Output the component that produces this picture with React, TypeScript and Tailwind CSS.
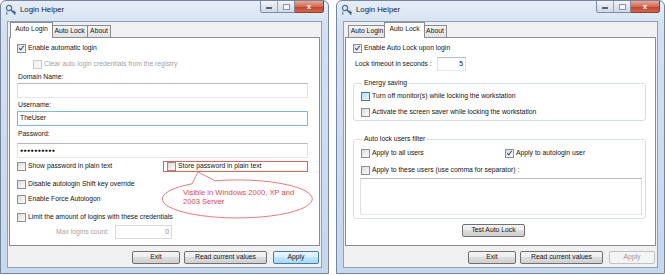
import type { ReactNode } from "react"
import { clsx } from "clsx"

function Box({ checked = false, disabled = false, hover = false }: { checked?: boolean; disabled?: boolean; hover?: boolean }) {
  return (
    <span
      className={clsx(
        "flex h-[9px] w-[9px] shrink-0 items-center justify-center border",
        disabled
          ? "border-[#c9c9c9] bg-[#f4f4f4]"
          : hover
            ? "border-[#3c7fb1] bg-[linear-gradient(135deg,#b9def6,#eef8fe)]"
            : "border-[#8f8f8f] bg-[linear-gradient(135deg,#d9d9d9,#ffffff)]"
      )}
    >
      {checked && (
        <svg viewBox="0 0 9 9" className="h-[8px] w-[8px]">
          <path d="M1.6 4.6 L3.6 7 L7.4 1.6" fill="none" stroke="#2c4a80" strokeWidth="1.3" />
        </svg>
      )}
    </span>
  )
}

function CheckRow({ label, checked, disabled, hover, className }: { label: string; checked?: boolean; disabled?: boolean; hover?: boolean; className?: string }) {
  return (
    <div className={clsx("flex h-[10px] items-center gap-[2px]", className)}>
      <Box checked={checked} disabled={disabled} hover={hover} />
      <span className={clsx("whitespace-nowrap", disabled && "text-[#a3a3a3]")}>{label}</span>
    </div>
  )
}

function TextBox({ children, focused, disabled, className }: { children?: ReactNode; focused?: boolean; disabled?: boolean; className?: string }) {
  return (
    <div
      className={clsx(
        "flex items-center border bg-white px-[2px]",
        focused ? "border-[#7eb4ea]" : disabled ? "border-[#d5d8dc]" : "border-[#b5b8be] border-b-[#e3e9ef] border-x-[#dbdfe6]",
        className
      )}
    >
      {children}
    </div>
  )
}

function Btn({ children, variant = "normal", className }: { children: ReactNode; variant?: "normal" | "default" | "disabled"; className?: string }) {
  return (
    <button
      className={clsx(
        "flex h-[13px] items-center justify-center rounded-[2px] border",
        variant === "default"
          ? "border-[#3c7fb1] bg-[linear-gradient(#eaf6fd,#d9f0fc_50%,#bee6fd_50%,#a7d9f5)]"
          : variant === "disabled"
            ? "border-[#bfc3c6] bg-[#f4f4f4] text-[#9a9a9a]"
            : "border-[#707070] bg-[linear-gradient(#f4f4f4,#ebebeb_50%,#dddddd_50%,#cfcfcf)]",
        className
      )}
    >
      {children}
    </button>
  )
}

function TitleBar() {
  return (
    <div className="-mx-[6px] flex h-[20px] items-start px-[4px]">
      <div className="mt-[3px] flex h-[12px] items-center gap-[3px]">
        <svg viewBox="0 0 12 12" className="h-[12px] w-[12px]">
          <circle cx="4" cy="4" r="2.6" fill="none" stroke="#4f6f93" strokeWidth="1.2" />
          <path d="M5.8 5.8 L10.5 10.5 M8 8 L9.4 6.6 M9.3 9.3 L10.6 8" stroke="#2f5f8f" strokeWidth="1.3" fill="none" />
          <path d="M2 7 L1.2 10.8 M1.5 9.5 L3 9.8" stroke="#7b93ad" strokeWidth="1" fill="none" />
        </svg>
        <span className="text-[7.8px] text-[#1b1b1b]">Login Helper</span>
      </div>
      <div className="ml-auto flex h-[12px]">
        <div className="flex h-full w-[35px] overflow-hidden rounded-bl-[3px] border border-t-0 border-[#7d8ca2] bg-[linear-gradient(#f3f6fa,#dbe3ee_55%,#cfd9e7)]">
          <div className="flex w-[17px] items-center justify-center border-r border-[#9aa7b8]">
            <span className="mt-[3px] h-[2px] w-[6px] border border-[#5b6676] bg-white" />
          </div>
          <div className="flex flex-1 items-center justify-center">
            <span className="h-[6px] w-[7px] border border-[#8e99a8] bg-[#f4f6f9]" />
          </div>
        </div>
        <div className="flex h-full w-[29px] items-center justify-center rounded-br-[3px] border border-t-0 border-l-0 border-[#8b3b30] bg-[linear-gradient(#e9a594,#d46b55_50%,#c2412b_52%,#d0664c)]">
          <span className="text-[8px] font-bold leading-none text-white">x</span>
        </div>
      </div>
    </div>
  )
}

function Tabs({ active }: { active: number }) {
  const tabs = [
    { label: "Auto Login", w: "w-[38px]", wa: "w-[43px]" },
    { label: "Auto Lock", w: "w-[37px]", wa: "w-[41px]" },
    { label: "About", w: "w-[24px]", wa: "w-[28px]" },
  ]
  return (
    <div className="flex h-[15px] items-end pl-[3px]">
      {tabs.map((t, i) =>
        i === active ? (
          <div key={t.label} className={clsx("relative z-10 -mx-[2px] -mb-[1px] flex h-[16px] items-start justify-center border border-b-0 border-[#898c95] bg-white pt-[3px]", t.wa)}>
            {t.label}
          </div>
        ) : (
          <div key={t.label} className={clsx("flex h-[12px] items-center justify-center border border-b-0 border-[#898c95] bg-[linear-gradient(#f3f3f3,#e3e3e3)]", t.w, i > 0 && i !== active + 1 && "-ml-[1px]")}>
            {t.label}
          </div>
        )
      )}
    </div>
  )
}

function Window({ active, children, applyVariant }: { active: number; children: ReactNode; applyVariant: "default" | "disabled" }) {
  return (
    <div className="flex h-[274px] w-[329px] shrink-0 flex-col rounded-t-[6px] border border-[#75869c] bg-[linear-gradient(#e6edf6,#d2e0f1_30px,#c6d8ee)] px-[6px] pb-[5px]">
      <TitleBar />
      <div className="flex flex-1 flex-col border border-[#8fa1b8] bg-[#f0f0f0] px-[1px]">
        <Tabs active={active} />
        <div className="relative h-[209px] border border-[#898c95] bg-white">{children}</div>
        <div className="mt-[5px] flex pr-[1px]">
          <Btn className="ml-auto w-[48px]">Exit</Btn>
          <Btn className="ml-[4px] w-[83px]">Read current values</Btn>
          <Btn variant={applyVariant} className="ml-[6px] w-[46px]">Apply</Btn>
        </div>
      </div>
    </div>
  )
}

function AutoLoginPanel() {
  return (
    <div className="flex flex-col pl-[7px]">
      <CheckRow className="mt-[5px]" checked label="Enable automatic login" />
      <CheckRow className="mt-[6px] ml-[16px]" disabled label="Clear auto login credentials from the registry" />
      <div className="mt-[3px] flex h-[10px] items-center pl-[1px]">Domain Name:</div>
      <TextBox className="mt-[1px] h-[15px] w-[291px]" />
      <div className="mt-[2px] flex h-[10px] items-center pl-[1px]">Username:</div>
      <TextBox focused className="mt-[1px] h-[15px] w-[291px]">TheUser</TextBox>
      <div className="mt-[3px] flex h-[10px] items-center pl-[1px]">Password:</div>
      <TextBox className="mt-[4px] h-[15px] w-[291px]">
        <span className="text-[5.2px] tracking-[0.4px] text-black">●●●●●●●●●●</span>
      </TextBox>
      <div className="mt-[3px] flex h-[11px] items-center">
        <CheckRow className="w-[146px]" label="Show password in plain text" />
        <div className="flex h-[11px] w-[145px] items-center pl-[4px]">
          <CheckRow label="Store password in plain text" />
        </div>
      </div>
      <CheckRow className="mt-[7px]" label="Disable autologin Shift key override" />
      <CheckRow className="mt-[5px]" label="Enable Force Autologon" />
      <CheckRow className="mt-[8px]" label="Limit the amount of logins with these credentials" />
      <div className="mt-[3px] flex h-[14px] items-center">
        <span className="w-[93px] pr-[1px] text-right text-[#a3a3a3]">Max logins count:</span>
        <TextBox disabled className="ml-[5px] h-[14px] w-[57px] justify-end text-[#8a8a8a]">0</TextBox>
      </div>

      {/* red annotation drawn over the dialog */}
      <svg viewBox="0 0 175 67" className="pointer-events-none absolute left-[140px] top-[120px] h-[67px] w-[175px]">
        <path d="M42 25.8 L48 14 L65 22.8 A75 19 0 1 1 42 25.8 Z" fill="white" stroke="#ec6a6a" strokeWidth="0.9" />
        <rect x="13.5" y="3.5" width="144" height="10" fill="none" stroke="#ef5a5a" strokeWidth="1" />
      </svg>
      <div className="absolute left-[173px] top-[150px] text-[7.6px] leading-[9px] text-[#e8434d]">
        Visible in Windows 2000, XP and
        <br />
        2003 Server
      </div>
    </div>
  )
}

function Group({ label, className, children }: { label: string; className?: string; children: ReactNode }) {
  return (
    <div className={clsx("relative w-[293px] rounded-[3px] border border-[#d5dfe5] pl-[7px]", className)}>
      <span className="absolute -top-[6px] left-[8px] bg-white px-[2px] leading-[10px]">{label}</span>
      {children}
    </div>
  )
}

function AutoLockPanel() {
  return (
    <div className="flex flex-col pl-[7px]">
      <CheckRow className="mt-[5px]" checked label="Enable Auto Lock upon login" />
      <div className="mt-[4px] flex h-[14px] items-center">
        <span className="ml-[2px] w-[82px]">Lock timeout in seconds :</span>
        <TextBox className="h-[14px] w-[29px] justify-end">5</TextBox>
      </div>
      <Group label="Energy saving" className="mt-[12px] pb-[3px]">
        <CheckRow className="mt-[7px]" hover label="Turn off monitor(s) while locking the workstation" />
        <CheckRow className="mt-[6px]" label="Activate the screen saver while locking the workstation" />
      </Group>
      <Group label="Auto lock users filter" className="mt-[18px] pb-[3px]">
        <div className="mt-[8px] flex h-[10px] items-center">
          <CheckRow className="w-[144px]" label="Apply to all users" />
          <CheckRow checked label="Apply to autologin user" />
        </div>
        <CheckRow className="mt-[7px]" label="Apply to these users (use comma for separator) :" />
        <TextBox className="mt-[3px] -ml-[1px] h-[37px] w-[282px]" />
      </Group>
      <Btn className="mt-[5px] ml-[109px] w-[63px]">Test Auto Lock</Btn>
    </div>
  )
}

export default function App() {
  return (
    <div className="flex h-[275px] w-[665px] gap-[7px] overflow-hidden bg-white font-['Liberation_Sans',Arial,sans-serif] text-[6.8px] leading-none text-[#141414]">
      <Window active={0} applyVariant="default">
        <AutoLoginPanel />
      </Window>
      <Window active={1} applyVariant="disabled">
        <AutoLockPanel />
      </Window>
    </div>
  )
}
